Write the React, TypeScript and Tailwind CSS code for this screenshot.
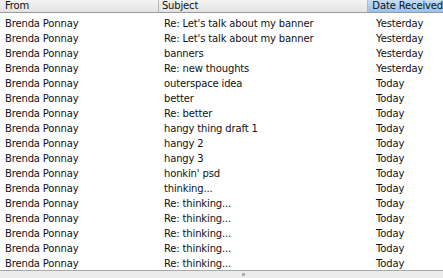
import React from "react";

const rows: [string, string, string][] = [
  ["Brenda Ponnay", "Re: Let's talk about my banner", "Yesterday"],
  ["Brenda Ponnay", "Re: Let's talk about my banner", "Yesterday"],
  ["Brenda Ponnay", "banners", "Yesterday"],
  ["Brenda Ponnay", "Re: new thoughts", "Yesterday"],
  ["Brenda Ponnay", "outerspace idea", "Today"],
  ["Brenda Ponnay", "better", "Today"],
  ["Brenda Ponnay", "Re: better", "Today"],
  ["Brenda Ponnay", "hangy thing draft 1", "Today"],
  ["Brenda Ponnay", "hangy 2", "Today"],
  ["Brenda Ponnay", "hangy 3", "Today"],
  ["Brenda Ponnay", "honkin' psd", "Today"],
  ["Brenda Ponnay", "thinking...", "Today"],
  ["Brenda Ponnay", "Re: thinking...", "Today"],
  ["Brenda Ponnay", "Re: thinking...", "Today"],
  ["Brenda Ponnay", "Re: thinking...", "Today"],
  ["Brenda Ponnay", "Re: thinking...", "Today"],
  ["Brenda Ponnay", "Re: thinking...", "Today"],
];

export default function App() {
  return (
    <div
      className="w-[443px] h-[278px] overflow-hidden bg-white flex flex-col text-[10px] tracking-[-0.15px] text-[#111]"
      style={{ fontFamily: '"DejaVu Sans", Verdana, sans-serif' }}
    >
      <div className="flex h-[13px] shrink-0 border-b border-[#9a9a9a] bg-gradient-to-b from-[#f4f4f4] to-[#e2e2e2] leading-[12px] whitespace-nowrap">
        <div className="w-[160px] pl-[5px] border-r border-[#b8b8b8]">From</div>
        <div className="w-[211px] pl-[3px] border-r border-[#b8b8b8]">Subject</div>
        <div className="flex-1 pl-[4px] bg-gradient-to-b from-[#c4dcf4] to-[#98c2ec]">Date Received</div>
      </div>
      <div className="flex-1 flex flex-col pt-[3px] overflow-hidden">
        {rows.map((r, i) => (
          <div key={i} className="flex h-[15px] leading-[15px] shrink-0">
            <div className="w-[160px] pl-[5px] whitespace-nowrap overflow-hidden">{r[0]}</div>
            <div className="w-[212px] pl-[4px] whitespace-nowrap overflow-hidden">{r[1]}</div>
            <div className="flex-1 pl-[4px] whitespace-nowrap">{r[2]}</div>
          </div>
        ))}
      </div>
      <div className="h-[8px] shrink-0 border-t border-[#a8a8a8] bg-[#ececec] flex justify-center items-center">
        <div className="w-[3px] h-[3px] bg-[#b0b0b0] ml-[44px]" />
      </div>
    </div>
  );
}
